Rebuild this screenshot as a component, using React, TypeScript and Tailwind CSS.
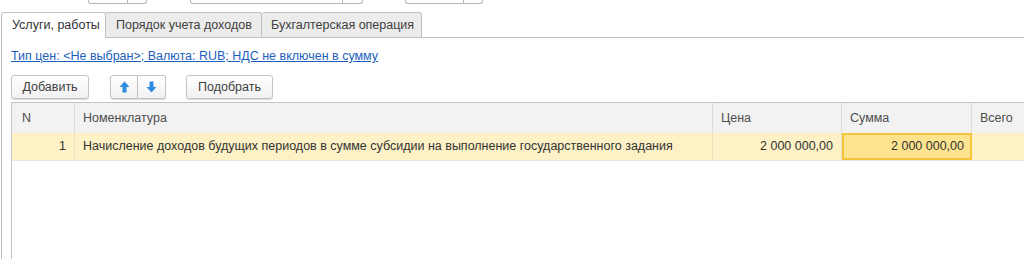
import React from "react";

const FONT = { fontFamily: '"Liberation Sans", Arial, sans-serif' };

function PartialField({ left, width, btn }: { left: number; width: number; btn: number }) {
  return (
    <div className="flex h-[4px] border-b border-x border-[#b5b5b5] rounded-b-[3px]" style={{ marginLeft: left, width }}>
      <div className="flex-1" />
      <div className="border-l border-[#b5b5b5]" style={{ width: btn }} />
    </div>
  );
}

function Btn({ children, className = "" }: { children: React.ReactNode; className?: string }) {
  return (
    <button
      className={`h-[24px] border border-[#c2c2c2] rounded-[3px] bg-gradient-to-b from-white to-[#f1f1f1] shadow-[0_1px_1px_rgba(0,0,0,0.15)] text-[12.5px] text-[#404040] flex items-center justify-center ${className}`}
    >
      {children}
    </button>
  );
}

function Arrow({ down }: { down?: boolean }) {
  return (
    <svg width="11" height="12" viewBox="0 0 11 12" className={down ? "rotate-180" : ""}>
      <path d="M5.5 0.5 L10.5 6 L7.5 6 L7.5 11.5 L3.5 11.5 L3.5 6 L0.5 6 Z" fill="#2f8ae0" />
    </svg>
  );
}

export default function App() {
  return (
    <div className="w-[1024px] h-[259px] bg-white overflow-hidden" style={FONT}>
      {/* cut-off fields from the form header */}
      <div className="flex h-[12px]">
        <PartialField left={88} width={59} btn={19} />
        <PartialField left={43} width={173} btn={20} />
        <PartialField left={42} width={78} btn={19} />
      </div>

      {/* tabs */}
      <div className="flex h-[26px] items-stretch text-[12.5px]">
        <div className="ml-[1px] w-[105px] border border-b-0 border-[#c0c0c0] rounded-t-[3px] bg-white flex items-center pl-[10px] text-[#333]">
          Услуги, работы
        </div>
        <div className="w-[156px] border border-l-0 border-[#c0c0c0] rounded-tr-[3px] bg-[#ececec] flex items-center pl-[10px] text-[#404040]">
          Порядок учета доходов
        </div>
        <div className="w-[160px] border border-l-0 border-[#c0c0c0] rounded-t-[3px] bg-[#ececec] flex items-center pl-[9px] text-[#404040]">
          Бухгалтерская операция
        </div>
        <div className="flex-1 border-b border-[#c0c0c0]" />
      </div>

      {/* tab panel */}
      <div className="ml-[1px] border-l border-[#c0c0c0] h-[221px] pl-[9px] pt-[11px]">
        <a className="block w-fit text-[12.5px] leading-[15px] text-[#1c5fbd] underline cursor-pointer">
          Тип цен: &lt;Не выбран&gt;; Валюта: RUB; НДС не включен в сумму
        </a>

        <div className="flex mt-[11px] h-[24px]">
          <Btn className="w-[78px]">Добавить</Btn>
          <div className="flex ml-[21px]">
            <Btn className="w-[28px] rounded-r-none">
              <Arrow />
            </Btn>
            <Btn className="w-[28px] rounded-l-none border-l-0">
              <Arrow down />
            </Btn>
          </div>
          <Btn className="ml-[20px] w-[87px]">Подобрать</Btn>
        </div>

        {/* table */}
        <div className="mt-[3px] border-t border-l border-[#c4c4c4] h-[170px] text-[12.5px]">
          <div className="grid grid-cols-[63px_638px_129px_130px_1fr] h-[30px] bg-[#f2f2f2] text-[#4d4d4d]">
            <div className="flex items-center pl-[10px] border-r border-[#dcdcdc]">N</div>
            <div className="flex items-center pl-[8px] border-r border-[#dcdcdc]">Номенклатура</div>
            <div className="flex items-center pl-[8px] border-r border-[#dcdcdc]">Цена</div>
            <div className="flex items-center pl-[8px] border-r border-[#dcdcdc]">Сумма</div>
            <div className="flex items-center pl-[8px]">Всего</div>
          </div>
          <div className="grid grid-cols-[63px_638px_129px_130px_1fr] h-[28px] bg-[#fdf1c5] text-[#333] border-b border-[#e6e6e6]">
            <div className="flex items-center justify-end pr-[8px] border-r border-[#e8e0bf]">1</div>
            <div className="flex items-center pl-[8px] border-r border-[#e8e0bf] whitespace-nowrap">
              Начисление доходов будущих периодов в сумме субсидии на выполнение государственного задания
            </div>
            <div className="flex items-center justify-end pr-[8px] border-r border-[#e8e0bf]">2 000 000,00</div>
            <div className="flex items-center justify-end pr-[6px] bg-[#fde38e] border-2 border-[#f5c63c]">2 000 000,00</div>
            <div />
          </div>
        </div>
      </div>
    </div>
  );
}
